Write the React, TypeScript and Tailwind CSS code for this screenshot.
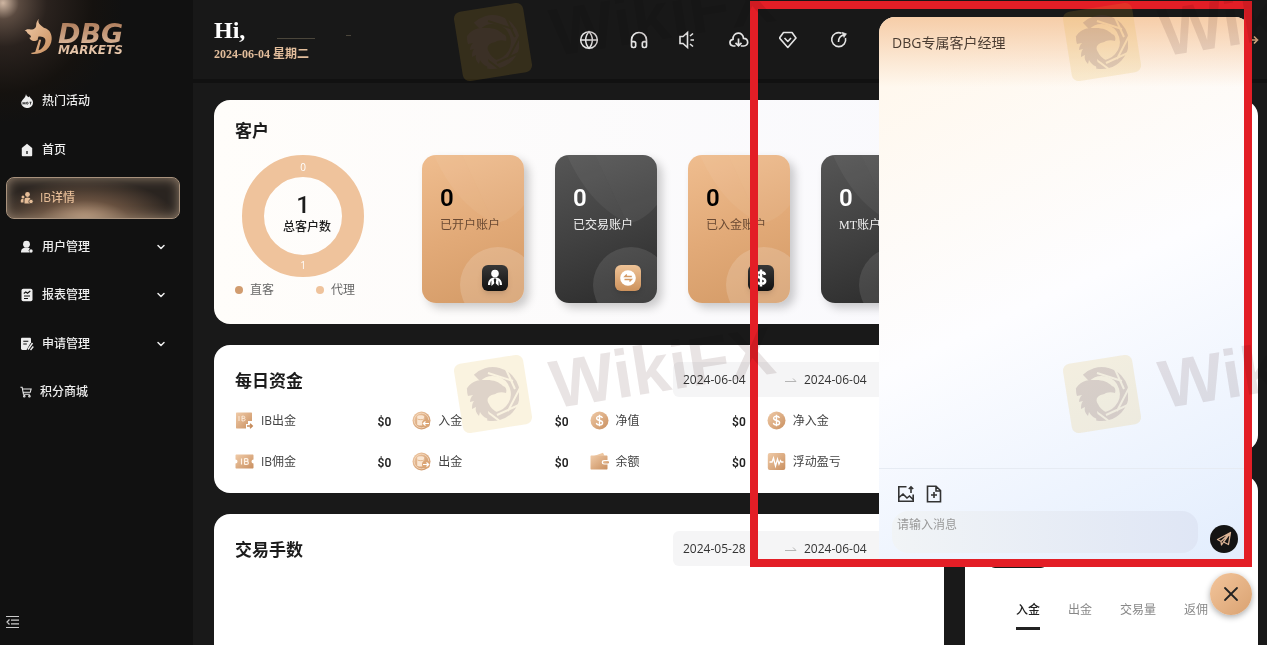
import { useState } from 'react';
import type { ReactNode } from 'react';
import { ChevronDown, Globe, Headphones, X } from 'lucide-react';

const TAN = 'url(#tan)';

const menu: { label: string; icon: ReactNode; active?: boolean; children?: boolean }[] = [
  {
    label: '热门活动',
    icon: (
      <svg viewBox="0 0 14 14" className="w-[14px] h-[14px]" fill="currentColor">
        <path d="M6 0c.3 1.800 1.500 2.300 2.400 3.300l1-1C9.800 4 13 5 13 8.600A5.500 5.200 0 0 1 7 14 5.600 5.300 0 0 1 1.200 9C1.200 6 5.500 4.500 6 0z" />
        <path d="M3 8v2.500M5 8v2.500M3 9.200h2M9.500 8.200h2M10.500 8.200v2.300" stroke="#111" strokeWidth=".8" />
        <circle cx="7.200" cy="9.200" r="1" fill="none" stroke="#111" strokeWidth=".8" />
      </svg>
    ),
  },
  {
    label: '首页',
    icon: (
      <svg viewBox="0 0 14 14" className="w-[14px] h-[14px]" fill="currentColor">
        <path d="M7 .8 1.800 5v7.300c0 .6.300.9.900.9h8.600c.6 0 .9-.3.900-.9V5z" />
        <path d="M7 8v3" stroke="#111" strokeWidth="1.300" />
      </svg>
    ),
  },
  {
    label: 'IB详情',
    active: true,
    icon: (
      <svg viewBox="0 0 14 14" className="w-[14px] h-[14px]" fill="currentColor">
        <circle cx="7.500" cy="3.500" r="2.400" />
        <circle cx="3" cy="6" r="1.500" />
        <path d="M4.500 12.500V8.800c0-1.600 1-2.300 3-2.300s3 .7 3 2.300v3.700zM.8 11.500V9.300c0-.9.800-1.300 2.700-1.300v3.500z" />
        <circle cx="11" cy="10.500" r="2.200" stroke="#3b322b" strokeWidth=".7" />
      </svg>
    ),
  },
  {
    label: '用户管理',
    children: true,
    icon: (
      <svg viewBox="0 0 14 14" className="w-[14px] h-[14px]" fill="currentColor">
        <circle cx="6.500" cy="4.200" r="3.400" />
        <path d="M1 12.500C1 9 3 7.600 6.500 7.600c1.500 0 2.500.3 3.300.9L8.500 10.500l1.200 2z" />
        <circle cx="11" cy="11" r="1.700" />
      </svg>
    ),
  },
  {
    label: '报表管理',
    children: true,
    icon: (
      <svg viewBox="0 0 14 14" className="w-[14px] h-[14px]" fill="currentColor">
        <rect x="1.500" y=".8" width="11" height="12.400" rx="1.800" />
        <path d="M3.800 5.500 5.800 4l1.700 1.200L10.300 3M4 8h6M4 10.500h4" fill="none" stroke="#111" strokeWidth="1.100" />
      </svg>
    ),
  },
  {
    label: '申请管理',
    children: true,
    icon: (
      <svg viewBox="0 0 14 14" className="w-[14px] h-[14px]" fill="currentColor">
        <path d="M1 2.200C1 1.300 1.500.8 2.400.8h7.200c.9 0 1.400.5 1.400 1.400v3L6.500 13H2.400C1.500 13 1 12.500 1 11.600z" />
        <path d="M3.300 4.300h5M3.300 7h3.500" stroke="#111" strokeWidth="1.100" />
        <path d="M12.500 6 8 12.500M13.300 9.500 10.500 13" stroke="currentColor" strokeWidth="1.400" />
      </svg>
    ),
  },
  {
    label: '积分商城',
    icon: (
      <svg viewBox="0 0 14 14" className="w-3 h-3" fill="none" stroke="currentColor" strokeWidth="1.200">
        <path d="M.5 1.500h2l1.500 8h7.500M3 3.500h10L12 7.300H3.700" />
        <circle cx="5" cy="12" r=".9" />
        <circle cx="11" cy="12" r=".9" />
      </svg>
    ),
  },
];

const stats = [
  { label: '已开户账户', dark: false, icon: 'person' },
  { label: '已交易账户', dark: true, icon: 'swap' },
  { label: '已入金账户', dark: false, icon: 'dollar' },
  { label: 'MT账户', dark: true, icon: 'swap' },
];

const funds: { label: string; icon: ReactNode }[] = [
  {
    label: 'IB出金',
    icon: (
      <>
        <path d="M2 1.500h14c.8 0 1 .4 1 1V10h-4v3h-2v4.500H2c-.7 0-1-.4-1-1v-14c0-.6.300-1 1-1z" fill={TAN} />
        <path d="M4 5v5M7 5v5M7 5.200h1.500c1.800 0 1.800 2.200 0 2.200H7h1.700c2 0 2 2.500 0 2.500H7" fill="none" stroke="#fbe9d8" strokeWidth="1" />
        <path d="M12 15h5M15 12.800l2.300 2.200-2.300 2.200" fill="none" stroke="#c58a5a" strokeWidth="1.400" />
      </>
    ),
  },
  { label: '入金', icon: <CoinIcon arrow="M17 12.500h-5.500M13.500 10.500l-2.200 2 2.200 2" /> },
  { label: '净值', icon: <DollarIcon /> },
  { label: '净入金', icon: <DollarIcon /> },
  {
    label: 'IB佣金',
    icon: (
      <>
        <path d="M1.500 2.500h16c.6 0 1 .4 1 1v4a2 2 0 0 0 0 4v4c0 .6-.4 1-1 1h-16c-.6 0-1-.4-1-1v-4a2 2 0 0 0 0-4v-4c0-.6.4-1 1-1z" fill={TAN} />
        <path d="M6.500 6.500v6M9.500 6.500v6M9.500 6.700h2c2 0 2 2.700 0 2.700h-2h2.200c2.200 0 2.200 3 0 3H9.500" fill="none" stroke="#fff3e6" strokeWidth="1.200" />
      </>
    ),
  },
  { label: '出金', icon: <CoinIcon arrow="M11 12.500h5.500M14.500 10.500l2.200 2-2.200 2" /> },
  {
    label: '余额',
    icon: (
      <>
        <path d="M4 4 13 .8l1.500 3z" fill="#eec7a0" />
        <path d="M1.500 3.500h15c.7 0 1 .4 1 1V8H14a2.300 2.300 0 0 0 0 4.600h3.500v3.900c0 .7-.3 1-1 1h-15c-.7 0-1-.3-1-1v-12c0-.6.3-1 1-1z" fill={TAN} />
        <rect x="13" y="9" width="6" height="2.600" rx="1.300" fill={TAN} />
      </>
    ),
  },
  {
    label: '浮动盈亏',
    icon: (
      <>
        <rect x=".8" y="1" width="17.500" height="17" rx="2" fill={TAN} />
        <path d="M2.500 10H5l1.500-4 2 8 2-7 1.500 5 1.500-3.500 1 1.500h2" fill="none" stroke="#fff" strokeWidth="1.300" />
      </>
    ),
  },
];

function CoinIcon({ arrow }: { arrow: string }) {
  return (
    <>
      <circle cx="9.500" cy="9.500" r="9" fill={TAN} />
      <circle cx="9.500" cy="9.500" r="7.300" fill="none" stroke="#f6dcc2" strokeWidth=".8" />
      <path d="M5.200 5.500c0-1.700 7-1.700 7 0v8c0 1.400-7 1.400-7 0z" fill="#fae6d2" />
      <path d="M5.500 8c1.500.9 5 .9 6.500 0" fill="none" stroke="#d9a06c" strokeWidth=".7" />
      <circle cx="14" cy="12.500" r="4" fill="#dba676" />
      <path d={arrow} fill="none" stroke="#fff" strokeWidth="1.200" />
    </>
  );
}

function DollarIcon() {
  return (
    <>
      <circle cx="9.500" cy="9.500" r="9" fill={TAN} />
      <path d="M9.500 3.800v11.400M12.400 7c-.3-1.300-1.400-1.800-2.900-1.800-1.700 0-2.900.7-2.900 2.100 0 3.100 6 1.300 6 4.400 0 1.500-1.300 2.200-3.100 2.200-1.700 0-2.900-.7-3.100-2.100" fill="none" stroke="#fff" strokeWidth="1.400" />
    </>
  );
}

function DateRange({ name, from, to }: { name: string; from: string; to: string }) {
  return (
    <div className="flex items-center w-[250px] h-[35px] pl-[10px] rounded-md bg-[#f5f5f6] text-[#333]">
      <input aria-label={`${name} from`} defaultValue={from} className="w-[102px] bg-transparent outline-none" />
      <svg viewBox="0 0 12 6" className="w-3 h-[6px] mr-[7px]" fill="none" stroke="#b5b5b5">
        <path d="M0 4.500h11L8 1.500" />
      </svg>
      <input aria-label={`${name} to`} defaultValue={to} className="w-20 bg-transparent outline-none" />
    </div>
  );
}

function StatIcon({ icon }: { icon: string }) {
  if (icon === 'person') {
    return (
      <svg viewBox="0 0 26 26" fill="#fff">
        <circle cx="13" cy="8.500" r="3.800" />
        <path d="M6 20c0-5 2.500-7.500 7-7.500s7 2.500 7 7.500h-2.200c0-2-.4-3.500-1.200-4.500v5.500L13 17.800 9.400 21v-5.500C8.600 16.500 8.200 18 8.200 20z" />
        <path d="m13 13 1.300 1.500-.7 4.500h-1.200l-.7-4.500z" fill="#222" />
      </svg>
    );
  }
  if (icon === 'dollar') {
    return (
      <svg viewBox="0 0 26 26" fill="none" stroke="#fff" strokeWidth="2.500">
        <path d="M13 4.500v17M17 9.800c-.5-1.800-2-2.500-4-2.500-2.300 0-4 .9-4 2.700 0 4.200 8.200 1.800 8.200 6 0 1.900-1.800 2.800-4.200 2.800s-4-1-4.300-2.900" />
      </svg>
    );
  }
  return (
    <svg viewBox="0 0 26 26" fill="none">
      <circle cx="13" cy="13" r="7.800" fill="#fff" />
      <path d="M16.800 11.500h-7l2-2M9.500 14.500h7l-2 2" stroke="#d39a66" strokeWidth="1.300" />
    </svg>
  );
}

function StatCard({ label, dark, icon }: { label: string; dark: boolean; icon: string }) {
  return (
    <div
      className={
        'relative w-[102px] h-[148px] pl-[18px] pt-[30px] rounded-[14px] overflow-hidden ' +
        (dark
          ? 'bg-linear-160 from-[#565656] via-[#414141] to-[#2b2b2b] text-white'
          : 'bg-linear-160 from-[#efbd8f] via-[#e2aa78] to-[#d39a66] text-black')
      }
    >
      <svg viewBox="0 0 102 148" className="absolute inset-0" fill="#fff">
        <path d="M12 0h28l32 68C45 55 25 30 12 0z" opacity=".05" />
        <path d="M40 0h62v50c-12 14-22 18-30 18z" opacity=".06" />
        <circle cx="76" cy="130" r="38" opacity={dark ? '.1' : '.16'} />
      </svg>
      <p className="relative text-[24px] leading-[26px] font-semibold font-['Roboto',sans-serif]">0</p>
      <p
        className={
          "relative mt-[5px] leading-[18px] whitespace-nowrap font-['Liberation_Serif','Noto_Sans_CJK_SC',sans-serif] " +
          (dark ? 'text-[#eee]' : 'text-[#6b4a33]')
        }
      >
        {label}
      </p>
      <span
        className={
          'absolute right-4 bottom-3 w-[26px] h-[26px] rounded-md shadow-md ' +
          (dark ? 'bg-linear-to-b from-[#eec397] to-[#cd925c]' : 'bg-linear-to-b from-[#383838] to-[#111]')
        }
      >
        <StatIcon icon={icon} />
      </span>
    </div>
  );
}

function Watermark({ className }: { className: string }) {
  return (
    <div className={'absolute w-[340px] h-[110px] ' + className} aria-hidden="true">
      <svg viewBox="0 0 84 84" className="absolute left-0 top-[25px] w-[84px] h-[84px]">
        <mask id="blades">
          <rect width="84" height="84" fill="#fff" />
          <path d="M37 21 62 29M53 13l11 24M70 34 57 59M70 52 46 63M50 70 34 58" stroke="#000" strokeWidth="2" />
        </mask>
        <rect x="7" y="7" width="70" height="70" rx="7" transform="rotate(-9 42 42)" fill="#dcb030" opacity=".15" />
        <g opacity=".17">
          <path d="M26 26A22.500 22.500 0 1 1 37 64" fill="none" stroke="#5b3c5c" strokeWidth="9" mask="url(#blades)" />
          <path
            d="M15.500 37C19 31 25 28 31 28h5c7 0 12 2 16 6 3 1 4 4 3 7-3-1-6-1-9 0-2 2-5 1-7 3-3 2-3 5-1 8 1 3 4 6 9 9-5 1-8 0-10-2 0 3 2 6 4 9-6-1-10-4-12-8l-1 4c-3-3-4-6-3-9l-4 2c0-3 0-6 2-8l-4 1c0-3 1-5 3-7l-5 1c-1-3-1-5-1-8z"
            fill="#5b3c5c"
          />
        </g>
      </svg>
      <span className="absolute left-[98px] top-[6px] -rotate-9 mix-blend-multiply text-[68px] leading-[68px] font-bold font-['Liberation_Sans',sans-serif] text-[#6b4c4c]/15">
        WikiFX
      </span>
    </div>
  );
}

function Sidebar() {
  return (
    <aside className="flex flex-col shrink-0 w-[193px] bg-[#111] bg-[radial-gradient(circle_at_3px_3px,#cfb6a2_0,#5a4a40_16px,#2a221e_44px,#15120f_90px,transparent_120px)]">
      <div className="flex items-start gap-[5px] h-[79px] pl-[24px] pt-[18px]">
        <svg viewBox="72 55 88 110" className="w-[29px] h-[37px]" fill={TAN}>
          <path
            fillRule="evenodd"
            d="M117 56c-3 8-1 14 5 19 5 4 8 8 12 9 14 4 23 16 22 34-2 27-23 44-56 45-3 0-6-1-7-3l13-3 12-38c-8 3-14 7-22 3-5-2-8-6-7-9 5 0 5-3 2-7-5-3-8-5-10-9-2-3-5-5-8-4 5-5 12-6 19-4 9 1 17-5 17-14 0-7 3-13 8-19zm-1 54-3 10h11l-8 32c13-5 21-18 21-30 0-8-7-12-21-12z"
          />
        </svg>
        <div className="pr-2 bg-linear-to-b from-[#a67351] to-[#f0d2b6] bg-clip-text text-transparent font-bold italic font-['DejaVu_Sans',sans-serif]">
          <p className="pt-1 text-[27px] leading-[23px]">DBG</p>
          <p className="text-xs leading-[11px]">MARKETS</p>
        </div>
      </div>
      <nav className="flex flex-col justify-between h-[333px] px-[6px] mt-px">
        {menu.map((item) => (
          <a
            key={item.label}
            href="#"
            className={
              'flex items-center h-[42px] w-[174px] pr-[13px] rounded-lg font-medium ' +
              (item.active
                ? 'gap-[6px] pl-[13px] border border-[#a8927d] bg-[radial-gradient(ellipse_at_45%_110%,#dcb797_0,#67503f_35%,transparent_70%)] bg-[#2a2420] shadow-[inset_0_0_12px_#94806d] text-[#e6bd97]'
                : 'gap-2 pl-[14px] text-[#eee]')
            }
          >
            {item.icon}
            <span>{item.label}</span>
            {item.children && <ChevronDown className="ml-auto w-3 h-3" strokeWidth={3} />}
          </a>
        ))}
      </nav>
      <button aria-label="Collapse menu" className="mt-auto mb-4 ml-[6px] w-[14px] h-[14px] text-[#ccc]">
        <svg viewBox="0 0 14 14" fill="none" stroke="currentColor" strokeWidth="1.200">
          <path d="M0 1.500h13M5 5.200h8M5 8.800h8M0 12.500h13M3.500 4.500 1 7l2.500 2.500" />
        </svg>
      </button>
    </aside>
  );
}

function Header() {
  const iconClass = 'w-5 h-5';
  return (
    <header className="flex items-center h-[83px] pl-[21px] pr-2 border-b-4 border-[#111] bg-[#181818] text-[#e4e4e4]">
      <div className="w-[365px] font-bold font-['Liberation_Serif','Noto_Sans_CJK_SC',serif]">
        <div className="flex items-end">
          <h1 className="text-2xl leading-[28px] text-white">Hi,</h1>
          <span className="w-[38px] h-px mb-[5px] ml-8 bg-[#4b463b]" />
          <span className="w-[5px] h-px mb-2 ml-[31px] bg-[#4b463b]" />
        </div>
        <p className="leading-[20px] text-[#e2bd9b]">2024-06-04 星期二</p>
      </div>
      <div className="flex gap-[30px]">
        <button aria-label="Language">
          <Globe className={iconClass} strokeWidth={1.8} />
        </button>
        <button aria-label="Support">
          <Headphones className={iconClass} strokeWidth={2} />
        </button>
        <button aria-label="Sound">
          <svg viewBox="0 0 20 20" className={iconClass} fill="none" stroke="currentColor" strokeWidth="1.600">
            <path d="M1 6.500h3l4.500-4v15l-4.500-4H1zM11 6l3-2.500M11.500 10H15M11 14l3 2.500" />
          </svg>
        </button>
        <button aria-label="Download">
          <svg viewBox="0 0 20 20" className={iconClass} fill="none" stroke="currentColor" strokeWidth="1.700">
            <path d="M6.500 16H4.200C-.2 15.500 0 9.700 4 9.300 3.800 1.500 14.200 1 14.500 8.300 20 8.300 20 16 14.800 16h-3M9.500 8.500v7M6.500 12.800l3 3 3-3" />
          </svg>
        </button>
        <button aria-label="Membership">
          <svg viewBox="0 0 20 20" className={iconClass} fill="none" stroke="currentColor" strokeWidth="1.600" strokeLinejoin="round">
            <path d="M4.500 2.500H13L17 8 8.800 17.500.5 8zM5.500 8l3.300 3.500L12 8" />
          </svg>
        </button>
        <button aria-label="Refresh">
          <svg viewBox="0 0 20 20" className={iconClass} fill="none" stroke="currentColor" strokeWidth="1.600">
            <path d="M12.500 3.200A7 7 0 1 0 16.500 8M9.500 12c0-4 2-6.500 5.500-7" />
            <path d="m13 2.300 4.500 1.500-2.500 3.700z" fill="currentColor" strokeWidth=".6" />
          </svg>
        </button>
      </div>
      <button aria-label="Log out" className="ml-auto text-[#dcae84]">
        <svg viewBox="0 0 12 10" className="w-3 h-[10px]" fill="none" stroke="currentColor" strokeWidth="1.600">
          <path d="M0 5h10M7 1.500 10.500 5 7 8.500" />
        </svg>
      </button>
    </header>
  );
}

function ClientCard() {
  return (
    <section className="h-[224px] px-[21px] pt-[18px] rounded-2xl bg-linear-to-r from-[#fffdfa] to-[#f9f9fd]">
      <h2 className="text-[17px] leading-[26px] font-bold">客户</h2>
      <div className="flex pt-[11px]">
        <div className="w-[187px]">
          <div className="relative w-[122px] h-[122px] ml-[7px] text-center">
            <svg viewBox="0 0 122 122" className="absolute inset-0">
              <circle cx="61" cy="61" r="50" fill="none" stroke="#efc39c" strokeWidth="22" />
            </svg>
            <div className="relative flex flex-col h-full">
              <span className="text-[10px] leading-6 text-white">0</span>
              <span className="mt-[12px] text-[24px] leading-[28px] font-medium font-['Roboto',sans-serif]">1</span>
              <span className="pl-2 leading-4 font-medium">总客户数</span>
              <span className="mt-auto text-[10px] leading-6 text-white">1</span>
            </div>
          </div>
          <ul className="flex gap-[42px] pt-[5px] text-[#666]">
            <li className="flex items-center gap-[7px]">
              <i className="w-2 h-2 rounded-full bg-[#d19c6f]" />
              直客
            </li>
            <li className="flex items-center gap-[7px]">
              <i className="w-2 h-2 rounded-full bg-[#efc39c]" />
              代理
            </li>
          </ul>
        </div>
        <div className="flex flex-1 justify-between">
          {stats.map((s) => (
            <div key={s.label} className="rounded-[14px] h-[148px] shadow-[5px_5px_10px_#0003]">
              <StatCard {...s} />
            </div>
          ))}
        </div>
      </div>
    </section>
  );
}

function FundsCard() {
  return (
    <section className="h-[148px] px-[21px] pt-[17px] rounded-2xl bg-white">
      <div className="flex items-center justify-between">
        <h2 className="pt-[3px] text-[17px] font-bold">每日资金</h2>
        <DateRange name="Funds" from="2024-06-04" to="2024-06-04" />
      </div>
      <dl className="grid grid-cols-4 gap-x-[21px] pt-[3px] text-[#444]">
        {funds.map((f) => (
          <div key={f.label} className="flex items-center h-[41px]">
            <svg viewBox="0 0 19 19" className="w-[19px] h-[19px] mr-[7px]">
              {f.icon}
            </svg>
            <dt>{f.label}</dt>
            <dd className="ml-auto pt-[2px] font-semibold text-[#222] font-['Roboto',sans-serif]">$0</dd>
          </div>
        ))}
      </dl>
    </section>
  );
}

function ChatPanel() {
  const [message, setMessage] = useState('');

  return (
    <section className="absolute right-4 top-[17px] bottom-[83px] flex flex-col w-[372px] rounded-t-2xl overflow-hidden bg-linear-155 from-[#fff8ee] from-10% via-[#fdfdff] via-50% to-[#e2edfd]">
      <h2 className="h-[70px] pl-[13px] pt-4 text-sm bg-linear-to-b from-[#f6cda8] to-transparent text-[#4a3c32]">
        DBG专属客户经理
      </h2>
      <form className="flex flex-col mt-auto h-[94px] pl-[13px] border-t border-[#e6ebf3]" onSubmit={(e) => e.preventDefault()}>
        <div className="flex gap-[10px] pt-4 pl-[5px] text-[#333]">
          <button type="button" aria-label="Send image">
            <svg viewBox="0 0 18 18" className="w-[18px] h-[18px]" fill="none" stroke="currentColor" strokeWidth="1.600">
              <path d="M9.500 1.800H1.800v14.400h14.400V9.500M14 8V2M11.800 4 14 1.800 16.200 4M2 12.500 6 9l4 4 2.500-2 3.500 3.500" />
            </svg>
          </button>
          <button type="button" aria-label="Send file">
            <svg viewBox="0 0 18 18" className="w-[18px] h-[18px]" fill="none" stroke="currentColor" strokeWidth="1.600">
              <path d="M2.500 1.200h8.500L15.500 5.500v11.300h-13zM11 1.500V6h4M9 7v6M6 10h6" />
            </svg>
          </button>
        </div>
        <div className="flex items-end gap-[12px] pt-2">
          <textarea
            aria-label="Message"
            placeholder="请输入消息"
            value={message}
            onChange={(e) => setMessage(e.target.value)}
            className="w-[306px] h-[42px] px-[5px] py-[6px] rounded-2xl resize-none outline-none bg-linear-to-r from-[#f1f4f6] to-[#dfe6f5] placeholder:text-[#999]"
          />
          <button aria-label="Send" className="w-7 h-7 rounded-full bg-[#141414]">
            <svg viewBox="0 0 28 28" fill="none" stroke="#dcb496" strokeWidth="1.300" strokeLinejoin="round">
              <path d="m20.500 7.500-13 7 3.500 2 9.500-9-2 12-5-2.500-2 3-.5-3.500M13.500 17l7-9.500" />
            </svg>
          </button>
        </div>
      </form>
    </section>
  );
}

export default function App() {
  const [tab, setTab] = useState('入金');
  const [chatOpen, setChatOpen] = useState(true);

  return (
    <div className="relative flex h-screen overflow-hidden bg-[#191919] text-xs text-[#1c1c1c] font-['Open_Sans','Noto_Sans_CJK_SC',sans-serif]">
      <svg className="absolute w-0 h-0" aria-hidden="true">
        <linearGradient id="tan" x1="0" y1="0" x2="1" y2="1">
          <stop offset="0" stopColor="#f0cba8" />
          <stop offset="1" stopColor="#c98f5f" />
        </linearGradient>
      </svg>
      <Sidebar />
      <div className="flex flex-col flex-1 min-w-0">
        <Header />
        <main className="flex flex-1 gap-[21px] pl-[21px] pr-[9px] pt-[17px] min-h-0">
          <div className="flex flex-col flex-1 gap-[21px] min-w-0">
            <ClientCard />
            <FundsCard />
            <section className="flex-1 px-[21px] pt-[17px] rounded-t-2xl bg-white">
              <div className="flex items-center justify-between">
                <h2 className="pt-[3px] text-[17px] font-bold">交易手数</h2>
                <DateRange name="Lots" from="2024-05-28" to="2024-06-04" />
              </div>
            </section>
          </div>
          <div className="flex flex-col w-[293px] gap-6">
            <section className="h-[351px] rounded-2xl bg-white" />
            <section className="flex-1 pt-16 rounded-t-2xl bg-white">
              <div className="w-[58px] h-[29px] ml-[24px] rounded-md bg-[#1c1c1c]" />
              <div role="tablist" className="flex gap-7 pl-[51px] pt-[33px] text-[#888]">
                {['入金', '出金', '交易量', '返佣'].map((t) => (
                  <button
                    key={t}
                    role="tab"
                    aria-selected={t === tab}
                    onClick={() => setTab(t)}
                    className={'h-[29px] pb-2 border-b-[3px] ' + (t === tab ? 'border-[#222] text-[#222] font-medium' : 'border-transparent')}
                  >
                    {t}
                  </button>
                ))}
              </div>
            </section>
          </div>
        </main>
      </div>

      {chatOpen && <ChatPanel />}
      <button
        aria-label="Toggle chat"
        onClick={() => setChatOpen(!chatOpen)}
        className="absolute right-[15px] bottom-[30px] flex items-center justify-center w-[42px] h-[42px] rounded-full bg-linear-to-br from-[#f3c59b] to-[#d9a271] shadow-[0_2px_6px_#0005] text-[#222]"
      >
        <X className="w-6 h-6" strokeWidth={1.8} />
      </button>
      <div className="absolute right-[15px] top-px w-[502px] h-[566px] border-8 border-[#e31e26] pointer-events-none" />

      <div className="absolute inset-0 overflow-hidden pointer-events-none">
        <Watermark className="left-[451px] -top-[25px]" />
        <Watermark className="left-[1060px] -top-[25px]" />
        <Watermark className="left-[451px] top-[327px]" />
        <Watermark className="left-[1060px] top-[327px]" />
      </div>
    </div>
  );
}
